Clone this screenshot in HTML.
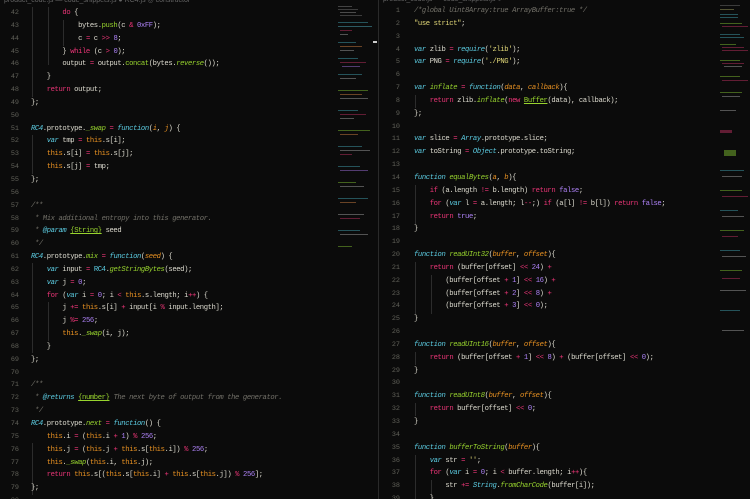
<!DOCTYPE html>
<html><head><meta charset="utf-8"><style>
html,body{margin:0;padding:0;background:#0b0b0b;width:750px;height:499px;overflow:hidden}
.pane{position:absolute;top:0;height:499px;overflow:hidden}
pre{position:absolute;margin:0;font-family:"Liberation Mono",monospace;font-size:7.2px;letter-spacing:-0.39px;line-height:12.85px;color:#dedcd0;white-space:pre}
.num{color:#62625a;text-align:right;letter-spacing:0;font-size:6.8px}
.k{color:#ec3577}.s{color:#5ccde3;font-style:italic}.f{color:#98d42e}.fi{color:#98d42e;font-style:italic}.p{color:#ea9222;font-style:italic}
.n{color:#ad82f6}.c{color:#74726a;font-style:italic}.y{color:#e2d878}.t{color:#ea9222}.u{color:#98d42e;text-decoration:underline}
.g{position:absolute;width:1px;background:#2c2c2c}
.mm div{position:absolute;height:1px;opacity:.45}
.hdr{position:absolute;top:-4px;font-family:"Liberation Sans",sans-serif;font-size:7px;color:#666}
</style></head><body>
<div class="pane" style="left:0;width:378px">
<div class="hdr" style="left:4px">product_code.js — code_snippets.js ● RC4.js ◎ constructor</div>
<pre class="num" style="left:0;top:7px;width:19px">42
43
44
45
46
47
48
49
50
51
52
53
54
55
56
57
58
59
60
61
62
63
64
65
66
67
68
69
70
71
72
73
74
75
76
77
78
79
80</pre>
<div class="g" style="left:32px;top:7px;height:90px"></div>
<div class="g" style="left:48px;top:7px;height:58px"></div>
<div class="g" style="left:63px;top:20px;height:26px"></div>
<div class="g" style="left:32px;top:135px;height:39px"></div>
<div class="g" style="left:32px;top:263px;height:90px"></div>
<div class="g" style="left:48px;top:302px;height:39px"></div>
<div class="g" style="left:32px;top:443px;height:52px"></div>
<pre style="left:31px;top:7px">        <span class="k">do</span> {
            bytes.<span class="f">push</span>(c <span class="k">&amp;</span> <span class="n">0xFF</span>);
            c <span class="k">=</span> c <span class="k">&gt;&gt;</span> <span class="n">8</span>;
        } <span class="k">while</span> (c <span class="k">&gt;</span> <span class="n">0</span>);
        output <span class="k">=</span> output.<span class="f">concat</span>(bytes.<span class="fi">reverse</span>());
    }
    <span class="k">return</span> output;
};

<span class="s">RC4</span>.prototype.<span class="fi">_swap</span> <span class="k">=</span> <span class="s">function</span>(<span class="p">i</span>, <span class="p">j</span>) {
    <span class="s">var</span> tmp <span class="k">=</span> <span class="t">this</span>.s[i];
    <span class="t">this</span>.s[i] <span class="k">=</span> <span class="t">this</span>.s[j];
    <span class="t">this</span>.s[j] <span class="k">=</span> tmp;
};

<span class="c">/**</span>
<span class="c"> * Mix additional entropy into this generator.</span>
<span class="c"> * </span><span class="s">@param</span> <span class="u">{String}</span> seed
<span class="c"> */</span>
<span class="s">RC4</span>.prototype.<span class="fi">mix</span> <span class="k">=</span> <span class="s">function</span>(<span class="p">seed</span>) {
    <span class="s">var</span> input <span class="k">=</span> <span class="s" style="font-style:normal">RC4</span>.<span class="fi">getStringBytes</span>(seed);
    <span class="s">var</span> j <span class="k">=</span> <span class="n">0</span>;
    <span class="k">for</span> (<span class="s">var</span> i <span class="k">=</span> <span class="n">0</span>; i <span class="k">&lt;</span> <span class="t">this</span>.s.length; i<span class="k">++</span>) {
        j <span class="k">+=</span> <span class="t">this</span>.s[i] <span class="k">+</span> input[i <span class="k">%</span> input.length];
        j <span class="k">%=</span> <span class="n">256</span>;
        <span class="t">this</span>.<span class="fi">_swap</span>(i, j);
    }
};

<span class="c">/**</span>
<span class="c"> * </span><span class="s">@returns</span> <span class="u">{number}</span> <span class="c">The next byte of output from the generator.</span>
<span class="c"> */</span>
<span class="s">RC4</span>.prototype.<span class="fi">next</span> <span class="k">=</span> <span class="s">function</span>() {
    <span class="t">this</span>.i <span class="k">=</span> (<span class="t">this</span>.i <span class="k">+</span> <span class="n">1</span>) <span class="k">%</span> <span class="n">256</span>;
    <span class="t">this</span>.j <span class="k">=</span> (<span class="t">this</span>.j <span class="k">+</span> <span class="t">this</span>.s[<span class="t">this</span>.i]) <span class="k">%</span> <span class="n">256</span>;
    <span class="t">this</span>.<span class="fi">_swap</span>(<span class="t">this</span>.i, <span class="t">this</span>.j);
    <span class="k">return</span> <span class="t">this</span>.s[(<span class="t">this</span>.s[<span class="t">this</span>.i] <span class="k">+</span> <span class="t">this</span>.s[<span class="t">this</span>.j]) <span class="k">%</span> <span class="n">256</span>];
};
</pre>
<div class="mm">
<div style="left:338px;top:6px;width:14px;background:#888"></div><div style="left:338px;top:9px;width:20px;background:#777"></div><div style="left:340px;top:12px;width:16px;background:#999"></div><div style="left:340px;top:15px;width:22px;background:#777"></div>
<div style="left:338px;top:22px;width:30px;background:#4ab"></div><div style="left:338px;top:26px;width:34px;background:#5bc"></div><div style="left:340px;top:30px;width:12px;background:#c36"></div><div style="left:340px;top:34px;width:8px;background:#aaa"></div>
<div style="left:338px;top:42px;width:18px;background:#4ab"></div><div style="left:340px;top:46px;width:22px;background:#d84"></div><div style="left:340px;top:50px;width:14px;background:#aaa"></div><div style="left:338px;top:58px;width:20px;background:#4ab"></div>
<div style="left:340px;top:62px;width:26px;background:#c36"></div><div style="left:342px;top:66px;width:18px;background:#a7e"></div><div style="left:338px;top:74px;width:24px;background:#4ab"></div><div style="left:340px;top:78px;width:16px;background:#aaa"></div>
<div style="left:338px;top:90px;width:30px;background:#8c3"></div><div style="left:340px;top:94px;width:22px;background:#d84"></div><div style="left:340px;top:98px;width:28px;background:#aaa"></div><div style="left:338px;top:110px;width:20px;background:#4ab"></div>
<div style="left:340px;top:114px;width:26px;background:#c36"></div><div style="left:340px;top:118px;width:14px;background:#aaa"></div><div style="left:338px;top:130px;width:32px;background:#8c3"></div><div style="left:340px;top:134px;width:18px;background:#d84"></div>
<div style="left:338px;top:146px;width:24px;background:#4ab"></div><div style="left:340px;top:150px;width:30px;background:#aaa"></div><div style="left:340px;top:154px;width:12px;background:#c36"></div><div style="left:338px;top:166px;width:22px;background:#4ab"></div>
<div style="left:340px;top:170px;width:28px;background:#a7e"></div><div style="left:338px;top:182px;width:18px;background:#8c3"></div><div style="left:340px;top:186px;width:24px;background:#aaa"></div><div style="left:338px;top:198px;width:30px;background:#4ab"></div>
<div style="left:340px;top:202px;width:16px;background:#d84"></div><div style="left:338px;top:214px;width:26px;background:#aaa"></div><div style="left:340px;top:218px;width:20px;background:#c36"></div><div style="left:338px;top:230px;width:22px;background:#4ab"></div>
<div style="left:340px;top:234px;width:28px;background:#aaa"></div><div style="left:338px;top:246px;width:14px;background:#8c3"></div>
</div>
<div style="position:absolute;left:373px;top:41px;width:4px;height:2px;background:#ccc"></div>
</div>
<div style="position:absolute;left:378px;top:0;width:1px;height:499px;background:#2a2a2a"></div>
<div class="pane" style="left:379px;width:371px">
<div class="hdr" style="left:4px">product_code.js — code_snippets.js ●</div>
<pre class="num" style="left:0;top:5px;width:21px">1
2
3
4
5
6
7
8
9
10
11
12
13
14
15
16
17
18
19
20
21
22
23
24
25
26
27
28
29
30
31
32
33
34
35
36
37
38
39</pre>
<div class="g" style="left:36px;top:95px;height:13px"></div>
<div class="g" style="left:36px;top:185px;height:39px"></div>
<div class="g" style="left:36px;top:262px;height:52px"></div>
<div class="g" style="left:52px;top:275px;height:39px"></div>
<div class="g" style="left:36px;top:352px;height:13px"></div>
<div class="g" style="left:36px;top:403px;height:13px"></div>
<div class="g" style="left:36px;top:455px;height:44px"></div>
<div class="g" style="left:52px;top:480px;height:19px"></div>
<pre style="left:35px;top:5px"><span class="c">/*global Uint8Array:true ArrayBuffer:true */</span>
<span class="y">"use strict"</span>;

<span class="s">var</span> zlib <span class="k">=</span> <span class="s">require</span>(<span class="y">'zlib'</span>);
<span class="s">var</span> PNG <span class="k">=</span> <span class="s">require</span>(<span class="y">'./PNG'</span>);

<span class="s">var</span> <span class="fi">inflate</span> <span class="k">=</span> <span class="s">function</span>(<span class="p">data</span>, <span class="p">callback</span>){
    <span class="k">return</span> zlib.<span class="fi">inflate</span>(<span class="k">new</span> <span class="u">Buffer</span>(data), callback);
};

<span class="s">var</span> slice <span class="k">=</span> <span class="s">Array</span>.prototype.slice;
<span class="s">var</span> toString <span class="k">=</span> <span class="s">Object</span>.prototype.toString;

<span class="s">function</span> <span class="fi">equalBytes</span>(<span class="p">a</span>, <span class="p">b</span>){
    <span class="k">if</span> (a.length <span class="k">!=</span> b.length) <span class="k">return</span> <span class="n">false</span>;
    <span class="k">for</span> (<span class="s">var</span> l <span class="k">=</span> a.length; l<span class="k">--</span>;) <span class="k">if</span> (a[l] <span class="k">!=</span> b[l]) <span class="k">return</span> <span class="n">false</span>;
    <span class="k">return</span> <span class="n">true</span>;
}

<span class="s">function</span> <span class="fi">readUInt32</span>(<span class="p">buffer</span>, <span class="p">offset</span>){
    <span class="k">return</span> (buffer[offset] <span class="k">&lt;&lt;</span> <span class="n">24</span>) <span class="k">+</span>
        (buffer[offset <span class="k">+</span> <span class="n">1</span>] <span class="k">&lt;&lt;</span> <span class="n">16</span>) <span class="k">+</span>
        (buffer[offset <span class="k">+</span> <span class="n">2</span>] <span class="k">&lt;&lt;</span> <span class="n">8</span>) <span class="k">+</span>
        (buffer[offset <span class="k">+</span> <span class="n">3</span>] <span class="k">&lt;&lt;</span> <span class="n">0</span>);
}

<span class="s">function</span> <span class="fi">readUInt16</span>(<span class="p">buffer</span>, <span class="p">offset</span>){
    <span class="k">return</span> (buffer[offset <span class="k">+</span> <span class="n">1</span>] <span class="k">&lt;&lt;</span> <span class="n">8</span>) <span class="k">+</span> (buffer[offset] <span class="k">&lt;&lt;</span> <span class="n">0</span>);
}

<span class="s">function</span> <span class="fi">readUInt8</span>(<span class="p">buffer</span>, <span class="p">offset</span>){
    <span class="k">return</span> buffer[offset] <span class="k">&lt;&lt;</span> <span class="n">0</span>;
}

<span class="s">function</span> <span class="fi">bufferToString</span>(<span class="p">buffer</span>){
    <span class="s">var</span> str <span class="k">=</span> <span class="y">''</span>;
    <span class="k">for</span> (<span class="s">var</span> i <span class="k">=</span> <span class="n">0</span>; i <span class="k">&lt;</span> buffer.length; i<span class="k">++</span>){
        str <span class="k">+=</span> <span class="s">String</span>.<span class="fi">fromCharCode</span>(buffer[i]);
    }
</pre>
<div class="mm">
<div style="left:341px;top:5px;width:20px;background:#777"></div><div style="left:341px;top:9px;width:14px;background:#aa6"></div><div style="left:341px;top:14px;width:18px;background:#4ab"></div><div style="left:341px;top:17px;width:18px;background:#4ab"></div>
<div style="left:341px;top:23px;width:22px;background:#8c3"></div><div style="left:343px;top:26px;width:26px;background:#c36"></div><div style="left:341px;top:34px;width:20px;background:#4ab"></div><div style="left:341px;top:37px;width:24px;background:#4ab"></div>
<div style="left:341px;top:44px;width:16px;background:#8c3"></div><div style="left:343px;top:47px;width:22px;background:#c36"></div><div style="left:343px;top:50px;width:26px;background:#c36"></div><div style="left:341px;top:60px;width:20px;background:#8c3"></div>
<div style="left:343px;top:63px;width:22px;background:#c36"></div><div style="left:345px;top:66px;width:18px;background:#aaa"></div><div style="left:341px;top:76px;width:20px;background:#8c3"></div><div style="left:343px;top:80px;width:26px;background:#c36"></div>
<div style="left:341px;top:92px;width:22px;background:#8c3"></div><div style="left:343px;top:96px;width:18px;background:#aaa"></div><div style="left:341px;top:110px;width:16px;background:#aaa"></div><div style="left:341px;top:130px;width:12px;background:#c36;height:3px"></div>
<div style="left:345px;top:150px;width:12px;background:#8c3;height:6px"></div><div style="left:341px;top:170px;width:24px;background:#4ab"></div><div style="left:343px;top:176px;width:20px;background:#aaa"></div><div style="left:341px;top:190px;width:22px;background:#8c3"></div>
<div style="left:343px;top:196px;width:26px;background:#c36"></div><div style="left:341px;top:210px;width:18px;background:#4ab"></div><div style="left:343px;top:216px;width:22px;background:#aaa"></div><div style="left:341px;top:230px;width:24px;background:#8c3"></div>
<div style="left:343px;top:236px;width:16px;background:#c36"></div><div style="left:341px;top:250px;width:20px;background:#4ab"></div><div style="left:343px;top:256px;width:24px;background:#aaa"></div><div style="left:341px;top:270px;width:22px;background:#8c3"></div>
<div style="left:343px;top:278px;width:18px;background:#c36"></div><div style="left:341px;top:290px;width:26px;background:#aaa"></div><div style="left:341px;top:310px;width:20px;background:#4ab"></div><div style="left:343px;top:330px;width:22px;background:#aaa"></div>
</div>
</div>
</body></html>
